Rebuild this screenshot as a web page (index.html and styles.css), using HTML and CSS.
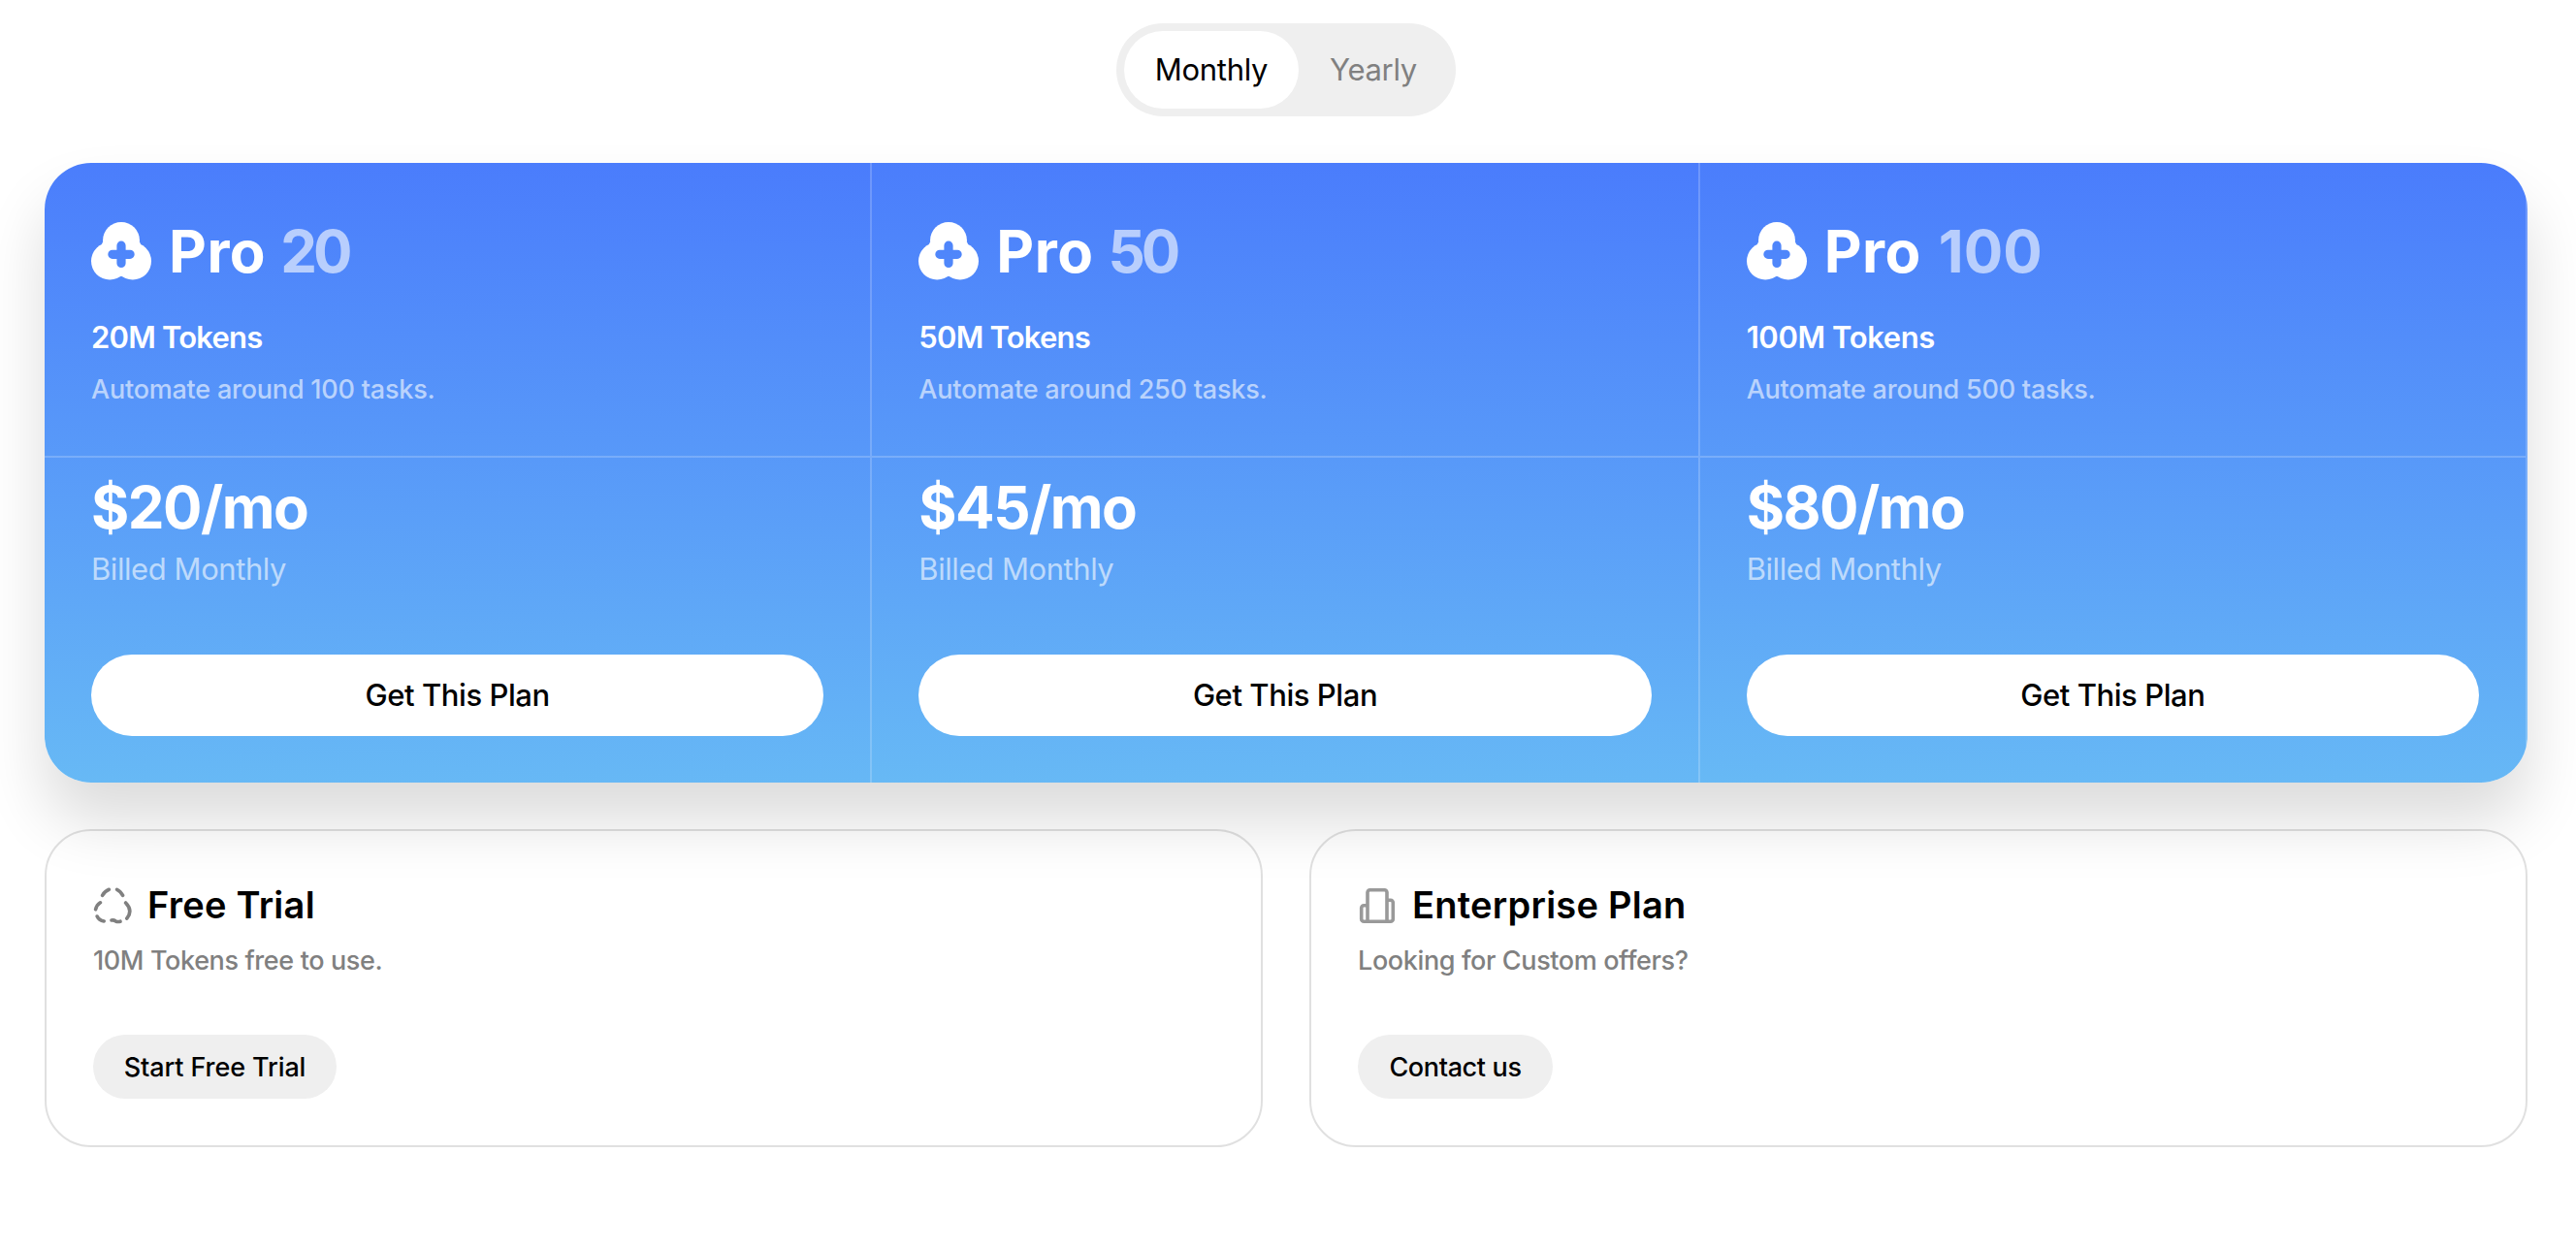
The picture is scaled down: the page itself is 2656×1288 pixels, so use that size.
FILE: index.html
```
<!DOCTYPE html>
<html lang="en">
<head>
    <meta charset="UTF-8">
    <meta name="viewport" content="width=device-width, initial-scale=1.0">
    <title>Pricing</title>
    <link rel="stylesheet" href="styles.css">
</head>
<body>
    <!-- Shared icon -->
    <svg class="icon-defs" width="0" height="0">
        <symbol id="clover" viewBox="0 0 62 60">
            <mask id="plus-cut">
                <rect width="62" height="60" fill="#fff"/>
                <path d="M31 24.2v18.2M21.9 33.3h18.2" stroke="#000" stroke-width="9.2" stroke-linecap="round"/>
                <path d="M25 33.3 31 27.3 37 33.3 31 39.3z" fill="#000"/>
            </mask>
            <g mask="url(#plus-cut)" fill="currentColor">
                <circle cx="31" cy="19" r="19"/>
                <circle cx="19.2" cy="40.3" r="19.2"/>
                <circle cx="42.8" cy="40.3" r="19.2"/>
                <path d="M12 20.5 11 22.8 31 40 51 22.8 50 20.5zM27 56.6Q31 55 35 56.6L31 40z"/>
            </g>
        </symbol>
    </svg>

    <main class="pricing">
        <!-- Billing Toggle -->
        <div class="toggle">
            <button class="toggle-option monthly active">Monthly</button>
            <button class="toggle-option yearly">Yearly</button>
        </div>

        <!-- Pro Plans -->
        <section class="plans">
            <div class="plan">
                <div class="plan-info">
                    <h2 class="plan-name">
                        <svg class="plan-icon"><use href="#clover"/></svg>
                        <span>Pro</span>
                        <span class="tier">20</span>
                    </h2>
                    <p class="tokens">20M Tokens</p>
                    <p class="tasks">Automate around 100 tasks.</p>
                </div>
                <div class="plan-price">
                    <p class="price">$20/mo</p>
                    <p class="billed">Billed Monthly</p>
                    <button class="plan-button">Get This Plan</button>
                </div>
            </div>
            <div class="plan">
                <div class="plan-info">
                    <h2 class="plan-name">
                        <svg class="plan-icon"><use href="#clover"/></svg>
                        <span>Pro</span>
                        <span class="tier">50</span>
                    </h2>
                    <p class="tokens">50M Tokens</p>
                    <p class="tasks">Automate around 250 tasks.</p>
                </div>
                <div class="plan-price">
                    <p class="price">$45/mo</p>
                    <p class="billed">Billed Monthly</p>
                    <button class="plan-button">Get This Plan</button>
                </div>
            </div>
            <div class="plan plan-large">
                <div class="plan-info">
                    <h2 class="plan-name">
                        <svg class="plan-icon"><use href="#clover"/></svg>
                        <span>Pro</span>
                        <span class="tier">100</span>
                    </h2>
                    <p class="tokens">100M Tokens</p>
                    <p class="tasks">Automate around 500 tasks.</p>
                </div>
                <div class="plan-price">
                    <p class="price">$80/mo</p>
                    <p class="billed">Billed Monthly</p>
                    <button class="plan-button">Get This Plan</button>
                </div>
            </div>
        </section>

        <!-- Other Options -->
        <section class="options">
            <div class="option">
                <h3 class="option-name">
                    <svg class="option-icon trial-icon" viewBox="0 0 40 40">
                        <path d="M9.6 9.4Q12 5 16.4 3.3M24.6 3.3Q28.4 5 30.6 9.4M33.6 17Q41.4 25 34.8 33.2M28 36.2Q25.4 37 23 35.8 21.4 34.6 19 35M11.2 36Q6 35 4.2 31M2.6 23.8Q3.8 19 7.4 16.8"/>
                    </svg>
                    <span>Free Trial</span>
                </h3>
                <p class="option-text">10M Tokens free to use.</p>
                <button class="option-button trial-button">Start Free Trial</button>
            </div>
            <div class="option">
                <h3 class="option-name">
                    <svg class="option-icon enterprise-icon" viewBox="0 0 40 40">
                        <path d="M10 36.3V6.2a2.5 2.5 0 0 1 2.5-2.5h15a2.5 2.5 0 0 1 2.5 2.5v30.1M10 19.7H6.2a2.5 2.5 0 0 0-2.5 2.5v11.6a2.5 2.5 0 0 0 2.5 2.5h27.6a2.5 2.5 0 0 0 2.5-2.5v-17a2.5 2.5 0 0 0-2.5-2.5H30"/>
                    </svg>
                    <span>Enterprise Plan</span>
                </h3>
                <p class="option-text">Looking for Custom offers?</p>
                <button class="option-button contact-button">Contact us</button>
            </div>
        </section>
    </main>
</body>
</html>
```
FILE: styles.css
```
/* General styling */
* {
    box-sizing: border-box;
}

body {
    font-family: Inter, "Liberation Sans", sans-serif;
    background-color: #fff;
    color: #000;
    margin: 0;
}

h2,
h3,
p {
    margin: 0;
}

button {
    font-family: inherit;
    color: #000;
    border: none;
    padding: 0 0 2px;
    white-space: nowrap;
    cursor: pointer;
}

.icon-defs {
    position: absolute;
}

.pricing {
    display: flex;
    flex-direction: column;
    align-items: center;
    gap: 48px;
    padding: 24px 50px 48px 46px;
}

/* Billing toggle */
.toggle {
    display: flex;
    padding: 8px;
    background-color: #efefef;
    border-radius: 48px;
}

.toggle-option {
    height: 80px;
    background: none;
    border-radius: 40px;
    color: #808080;
    font-size: 31px;
    letter-spacing: -0.3px;
}

.toggle-option.active {
    background-color: #fff;
    color: #000;
}

.monthly {
    width: 180px;
}

.yearly {
    width: 154px;
}

/* Pro plans */
.plans {
    display: grid;
    grid-template-columns: repeat(3, 1fr);
    width: 100%;
    border-radius: 48px;
    overflow: hidden;
    color: #fff;
    box-shadow: 0 40px 64px rgba(0, 0, 0, 0.14);
}

.plan {
    background: linear-gradient(181deg, #4a7cfc, #67b9f5) border-box;
    border-right: 2px solid rgba(255, 255, 255, 0.2);
}

.plan-info {
    height: 304px;
    padding: 48px 48px 0;
    border-bottom: 2px solid rgba(255, 255, 255, 0.2);
}

.plan-name {
    display: flex;
    align-items: center;
    height: 86px;
    font-size: 60px;
    font-weight: 650;
    letter-spacing: 0.5px;
}

.plan-icon {
    width: 62px;
    height: 60px;
    margin-right: 18px;
}

.tier {
    margin-left: 15px;
    color: rgba(255, 255, 255, 0.6);
    letter-spacing: -4px;
}

.plan-large .tier {
    margin-left: 18px;
    letter-spacing: 0;
}

.tokens {
    margin-top: 26px;
    font-size: 31px;
    line-height: 40px;
    font-weight: 600;
    letter-spacing: -0.8px;
}

.plan-large .tokens {
    letter-spacing: -0.4px;
}

.tasks {
    margin-top: 16px;
    font-size: 27px;
    line-height: 36px;
    font-weight: 500;
    letter-spacing: -0.22px;
    color: rgba(255, 255, 255, 0.6);
}

.plan-price {
    padding: 15px 48px 48px;
}

.price {
    font-size: 60px;
    line-height: 72px;
    font-weight: 650;
    letter-spacing: -1.5px;
}

.billed {
    margin-top: 8px;
    font-size: 31px;
    line-height: 40px;
    letter-spacing: -0.43px;
    color: rgba(255, 255, 255, 0.6);
}

.plan-button {
    width: 100%;
    height: 84px;
    margin-top: 68px;
    background-color: #fff;
    border-radius: 42px;
    font-size: 31px;
    font-weight: 500;
    letter-spacing: -0.43px;
}

/* Free trial and enterprise */
.options {
    display: grid;
    grid-template-columns: 1fr 1fr;
    gap: 48px;
    width: 100%;
}

.option {
    padding: 48px;
    border: 2px solid rgba(0, 0, 0, 0.12);
    border-radius: 48px;
}

.option-name {
    display: flex;
    align-items: center;
    gap: 16px;
    height: 57px;
    font-size: 38px;
    font-weight: 600;
    letter-spacing: 0.25px;
}

.option-name span {
    padding-bottom: 2px;
}

.option-icon {
    width: 40px;
    height: 40px;
    fill: none;
    stroke-width: 3.6;
    stroke-linecap: round;
    stroke-linejoin: round;
}

.trial-icon {
    stroke: #808080;
}

.enterprise-icon {
    stroke: #999;
    stroke-linecap: butt;
}

.option-text {
    margin-top: 11px;
    font-size: 27px;
    line-height: 36px;
    font-weight: 500;
    letter-spacing: -0.38px;
    color: #808080;
}

.option-button {
    height: 66px;
    margin-top: 58px;
    padding-bottom: 0;
    background-color: #efefef;
    border-radius: 33px;
    font-size: 27px;
    font-weight: 500;
}

.trial-button {
    width: 251px;
    letter-spacing: -0.1px;
}

.contact-button {
    width: 201px;
    letter-spacing: -0.36px;
}
```
